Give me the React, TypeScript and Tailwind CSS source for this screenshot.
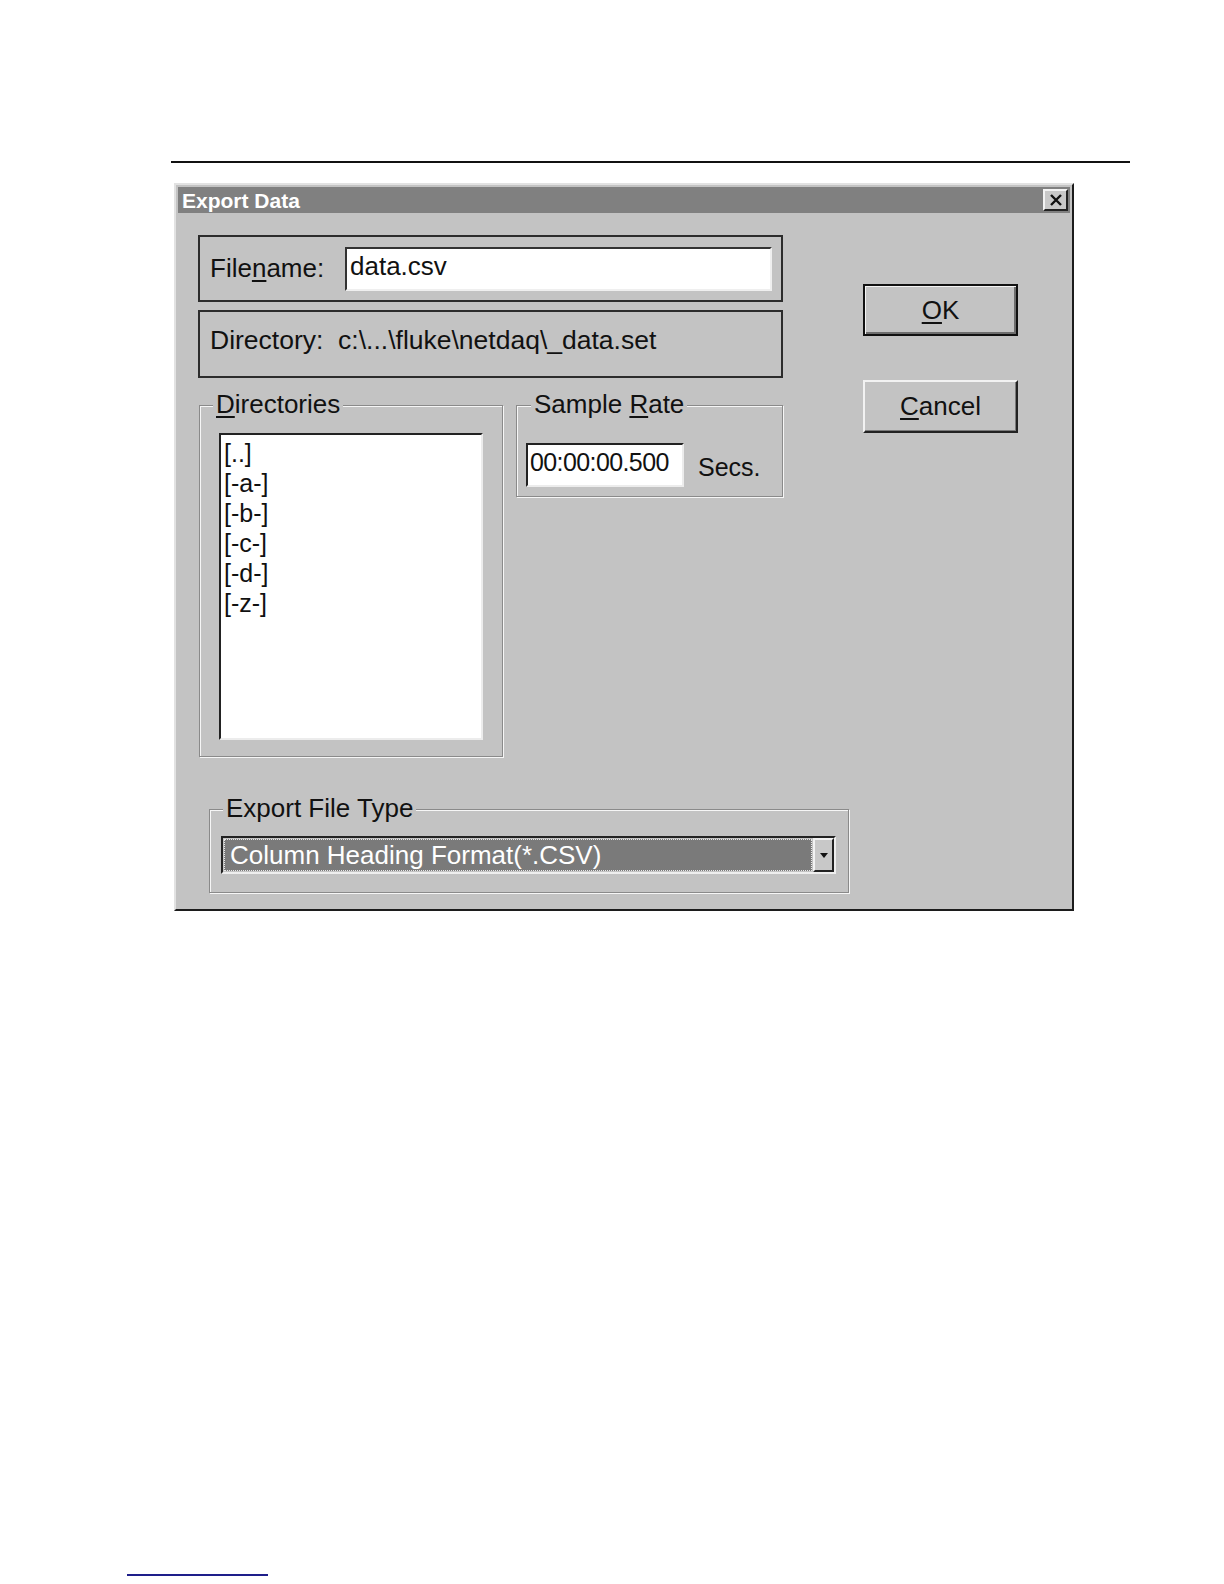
import React from 'react';

const font = { fontFamily: '"Liberation Sans", Arial, sans-serif' };

function GroupLabel({ children, left }: { children: React.ReactNode; left: string }) {
  return (
    <span className={`absolute top-[-17px] ${left} bg-[#c3c3c3] px-[3px] text-[26px] leading-[30px] text-[#111]`}>
      {children}
    </span>
  );
}

function Button({ children, isDefault }: { children: React.ReactNode; isDefault?: boolean }) {
  return (
    <div
      className={
        isDefault
          ? 'flex h-[52px] w-[155px] items-center justify-center border-2 border-[#111] bg-[#c3c3c3] text-[26px] text-[#111] shadow-[inset_1px_1px_0_#f4f4f4,inset_-2px_-2px_0_#6e6e6e]'
          : 'flex h-[53px] w-[155px] items-center justify-center border-2 border-t-[#f2f2f2] border-l-[#f2f2f2] border-r-[#222] border-b-[#222] bg-[#c3c3c3] text-[26px] text-[#111] shadow-[inset_-1px_-1px_0_#7a7a7a]'
      }
    >
      {children}
    </div>
  );
}

export default function App() {
  return (
    <div className="w-[1224px] h-[1584px] bg-white overflow-hidden" style={font}>
      {/* page rule */}
      <div className="ml-[171px] mt-[161px] h-[2px] w-[959px] bg-[#111]" />

      {/* dialog window */}
      <div className="ml-[174px] mt-[20px] flex h-[728px] w-[900px] flex-col border-2 border-t-[#e2e2e2] border-l-[#e2e2e2] border-r-[#1c1c1c] border-b-[#1c1c1c] bg-[#c3c3c3] p-[2px]">
        {/* title bar */}
        <div className="flex h-[26px] items-center justify-between bg-[#808080] pl-[4px] pr-[2px]">
          <span className="text-[21px] font-bold leading-none text-white">Export Data</span>
          <div className="flex h-[22px] w-[25px] items-center justify-center border-2 border-t-[#f2f2f2] border-l-[#f2f2f2] border-r-[#222] border-b-[#222] bg-[#c8c8c8]">
            <svg width="14" height="12" viewBox="0 0 14 12">
              <path d="M2 1 L12 11 M12 1 L2 11" stroke="#111" strokeWidth="2.4" />
            </svg>
          </div>
        </div>

        {/* top portion */}
        <div className="flex pl-[20px] pt-[22px]">
          <div className="flex w-[585px] flex-col">
            <div className="flex h-[67px] items-center border-2 border-[#2c2c2c] pl-[10px] text-[26px] text-[#111]">
              <span className="w-[135px]">
                File<u className="underline-offset-[3px]">n</u>ame:
              </span>
              <div className="flex h-[44px] w-[427px] items-center border-2 border-t-[#333] border-l-[#333] border-r-[#efefef] border-b-[#efefef] bg-white pb-[4px] pl-[3px]">
                data.csv
              </div>
            </div>

            <div className="mt-[8px] flex h-[68px] items-center border-2 border-[#2c2c2c] pb-[6px] pl-[10px] text-[26.5px] text-[#111]">
              <span className="whitespace-pre">Directory:  c:\...\fluke\netdaq\_data.set</span>
            </div>

            <div className="mt-[27px] flex items-start">
              {/* Directories group */}
              <div className="relative ml-[1px] h-[352px] w-[304px] border border-[#8a8a8a] shadow-[1px_1px_0_#f6f6f6,inset_1px_1px_0_#f6f6f6] pl-[19px] pt-[27px]">
                <GroupLabel left="left-[13px]">
                  <u className="underline-offset-[3px]">D</u>irectories
                </GroupLabel>
                <div className="h-[307px] w-[264px] border-2 border-t-[#222] border-l-[#222] border-r-[#ececec] border-b-[#ececec] bg-white pl-[3px] pt-[3px] text-[25px] leading-[30px] text-[#111]">
                  {['[..]', '[-a-]', '[-b-]', '[-c-]', '[-d-]', '[-z-]'].map((d) => (
                    <div key={d}>{d}</div>
                  ))}
                </div>
              </div>

              {/* Sample Rate group */}
              <div className="relative ml-[13px] flex h-[92px] w-[267px] items-start border border-[#8a8a8a] shadow-[1px_1px_0_#f6f6f6,inset_1px_1px_0_#f6f6f6] pl-[9px] pt-[37px]">
                <GroupLabel left="left-[14px]">
                  Sample <u className="underline-offset-[3px]">R</u>ate
                </GroupLabel>
                <div className="flex h-[44px] w-[158px] items-center border-2 border-t-[#222] border-l-[#222] border-r-[#ececec] border-b-[#ececec] bg-white pb-[4px] pl-[2px] text-[25px] tracking-[-0.6px] text-[#111]">
                  00:00:00.500
                </div>
                <span className="ml-[14px] mt-[6px] text-[25px] text-[#111]">Secs.</span>
              </div>
            </div>
          </div>

          {/* buttons */}
          <div className="ml-[80px] flex flex-col pt-[49px]">
            <Button isDefault>
              <span>
                <u className="underline-offset-[3px]">O</u>K
              </span>
            </Button>
            <div className="mt-[44px]">
              <Button>
                <span>
                  <u className="underline-offset-[3px]">C</u>ancel
                </span>
              </Button>
            </div>
          </div>
        </div>

        {/* Export File Type group */}
        <div className="relative ml-[31px] mt-[52px] h-[84px] w-[640px] border border-[#8a8a8a] shadow-[1px_1px_0_#f6f6f6,inset_1px_1px_0_#f6f6f6] pl-[11px] pt-[26px]">
          <GroupLabel left="left-[13px]">Export File Type</GroupLabel>
          <div className="flex h-[38px] w-[615px] border-2 border-t-[#222] border-l-[#222] border-r-[#eeeeee] border-b-[#eeeeee] bg-[#c3c3c3]">
            <div className="m-[1px] flex flex-1 items-center border border-dotted border-[#e8e8e8] bg-[#7a7a7a] pl-[5px] text-[26px] text-white">
              Column Heading Format(*.CSV)
            </div>
            <div className="flex w-[21px] items-center justify-center border-2 border-t-[#f2f2f2] border-l-[#f2f2f2] border-r-[#222] border-b-[#222] bg-[#c8c8c8]">
              <svg width="8" height="5" viewBox="0 0 8 5">
                <path d="M0 0 H8 L4 5 Z" fill="#111" />
              </svg>
            </div>
          </div>
        </div>
      </div>

      {/* footer link rule */}
      <div className="ml-[127px] mt-[663px] h-[2px] w-[141px] bg-[#1e1e8a]" />
    </div>
  );
}
